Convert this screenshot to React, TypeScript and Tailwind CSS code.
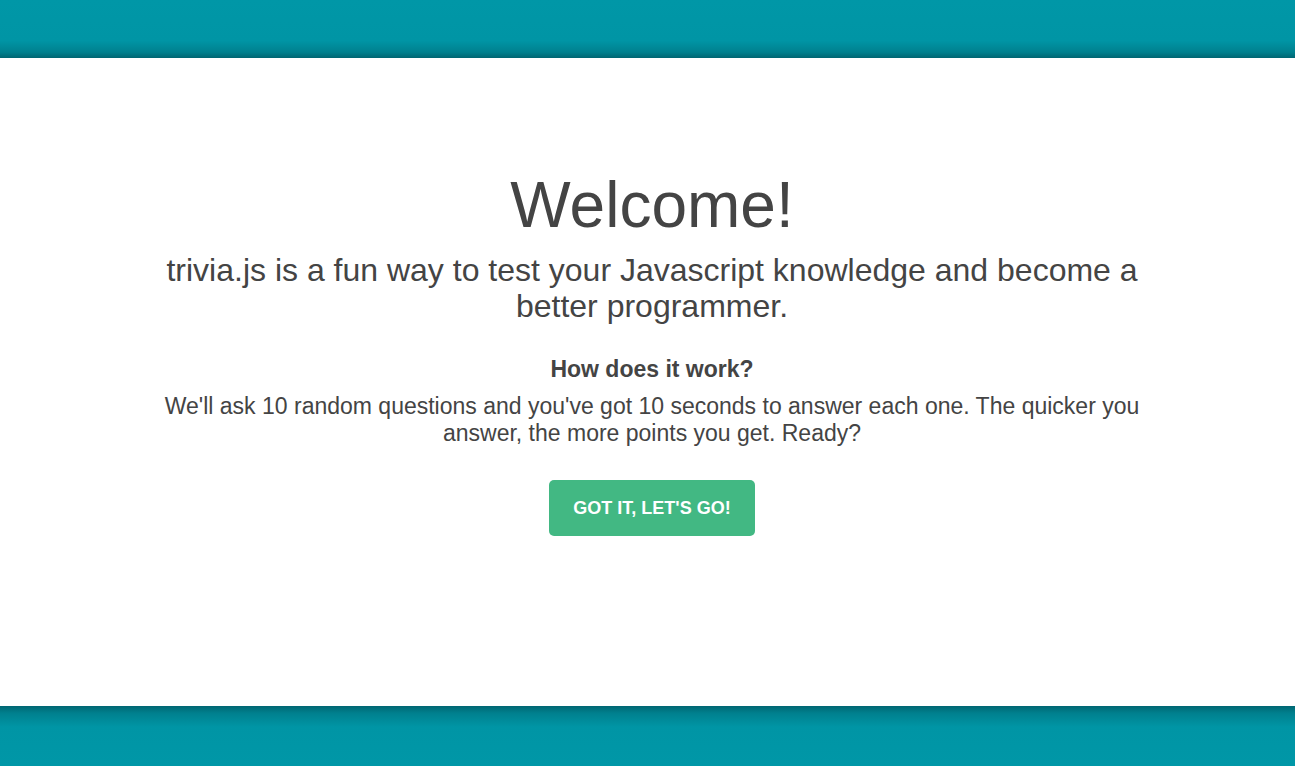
import React from "react";

export default function App() {
  return (
    <div
      className="flex h-[766px] w-full flex-col bg-white text-[#444]"
      style={{ fontFamily: '"Liberation Sans", Arial, sans-serif' }}
    >
      <header className="h-[58px] w-full bg-[linear-gradient(to_bottom,#0097a7_0%,#0095a5_70%,#00808e_90%,#006672_100%)]" />
      <main className="flex flex-1 justify-center pl-[9px]">
        <div className="flex w-[1000px] flex-col items-center pt-[107px] text-center">
          <h1 className="text-[64px] leading-[80px] font-normal text-[#444]">Welcome!</h1>
          <p className="mt-[7px] text-[32px] leading-[36px] text-[#444]">
            trivia.js is a fun way to test your Javascript knowledge and become a better programmer.
          </p>
          <h3 className="mt-[31px] text-[23px] leading-[28px] font-bold text-[#444]">How does it work?</h3>
          <p className="mt-[10px] text-[23px] leading-[27px] text-[#444]">
            We'll ask 10 random questions and you've got 10 seconds to answer each one. The quicker you answer, the more points you get. Ready?
          </p>
          <button className="mt-[33px] h-[56px] w-[206px] rounded-[5px] bg-[#42b883] text-[18px] font-bold text-white uppercase">
            Got it, let's go!
          </button>
        </div>
      </main>
      <footer className="h-[60px] w-full bg-[linear-gradient(to_bottom,#006672_0%,#00808e_12%,#0095a5_35%,#0097a7_100%)]" />
    </div>
  );
}
